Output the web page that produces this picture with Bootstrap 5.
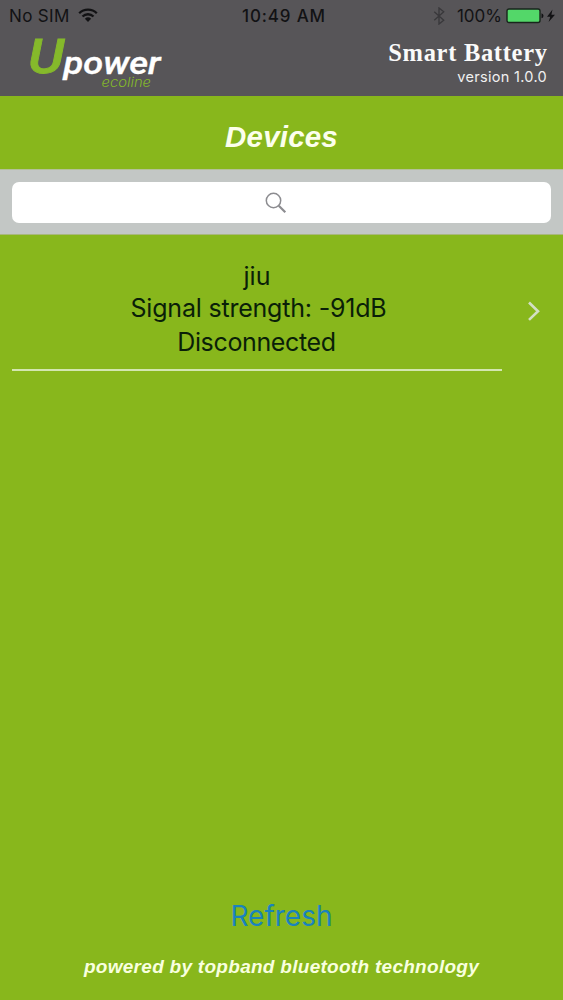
<!DOCTYPE html>
<html lang="en">
<head>
<meta charset="utf-8">
<meta name="viewport" content="width=device-width, initial-scale=1">
<title>Smart Battery</title>
<link href="https://cdn.jsdelivr.net/npm/bootstrap@5.3.0/dist/css/bootstrap.min.css" rel="stylesheet">
<style>
  body { background: #88b71c; font-family: Inter, Roboto, sans-serif; color: #0a1f08; }
  .topbar { height: 96px; background: #575558; }
  .statusbar { height: 31px; font-size: 17px; line-height: 31px; color: #121214; padding: 0 7px 0 9px; }
  .statusbar > div { flex: 1 1 0; }
  .nosim { letter-spacing: .35px; }
  .clock { font-weight: 500; letter-spacing: .85px; padding-left: 3px; }
  .clock, .nosim, .percent { padding-top: 1px; }
  .logo { overflow: visible; }
  .brand-title { font: bold 24.5px/26px "Liberation Serif", serif; letter-spacing: .7px; margin-right: -.7px; padding-top: 1px; color: #fafafa; }
  .version { font-size: 14.5px; line-height: 21px; color: #f0f0f0; letter-spacing: .3px; }
  .screen-title { font: italic bold 29.5px/33px "Liberation Sans", sans-serif; letter-spacing: .2px; color: #fcffec; height: 73px; padding-top: 24px; }
  .searchbar { height: 66px; background: #c3c7c5; padding: 12px; border-top: 1px solid #b4c198; border-bottom: 1px solid #a9b77d; }
  .searchbox { height: 41px; border-radius: 7px; }
  .device { height: 136px; padding: 25px 12px 0; }
  .device-text { width: 490px; height: 111px; border-bottom: 2px solid #d3e6b0; font-size: 25px; line-height: 34px; }
  .device-name { line-height: 32px; }
  .signal { line-height: 33px; letter-spacing: -.2px; padding-left: 3px; }
  .state { letter-spacing: -.35px; padding-right: 1px; }
  footer { height: 101px; }
  .refresh { font-size: 28px; line-height: 34px; color: #1a83bd; }
  .powered { font: italic bold 19px/22px "Liberation Sans", sans-serif; letter-spacing: .28px; color: #f8ffdf; margin-top: 23px; }
</style>
</head>
<body class="min-vh-100 d-flex flex-column overflow-hidden">
<header class="topbar">
  <div class="statusbar d-flex">
    <div class="d-flex align-items-center">
      <span class="nosim">No SIM</span>
      <svg class="ms-2" width="20" height="15" viewBox="0 0 20 15" fill="none" stroke="#121214" stroke-width="2.3"><path d="M1.2 5.2a12.5 12.5 0 0 1 17.6 0M4.5 8.5a7.8 7.8 0 0 1 11 0"/><path d="M10 14l-3.1-3.2a4.5 4.5 0 0 1 6.2 0z" fill="#121214" stroke="none"/></svg>
    </div>
    <div class="clock text-center">10:49 AM</div>
    <div class="d-flex align-items-center justify-content-end">
      <svg class="me-1" width="12" height="18" viewBox="0 0 12 19" fill="none" stroke="#39383b" stroke-width="1.4"><path d="M1 5l10 9-5 4V1l5 4L1 14"/></svg>
      <span class="percent ms-2">100%</span>
      <svg class="ms-1" width="50" height="16" viewBox="0 0 50 16"><rect x="1" y="1" width="33" height="13.5" rx="2" fill="#53d769" stroke="#19251c" stroke-width="1.4"/><path d="M35.5 5.3q2 .5 2 2.5t-2 2.5z" fill="#121214"/><path d="M46.5 1.5L41 8.7h3.3L42.6 14 49 6.7h-3.6z" fill="#121214"/></svg>
    </div>
  </div>
  <div class="d-flex justify-content-between">
    <svg class="logo" width="180" height="64" viewBox="0 31 180 64">
      <text x="28" y="73" font-family="Roboto" font-style="italic" font-weight="500" font-size="48" fill="#85b92b" stroke="#85b92b" stroke-width=".8" textLength="36" lengthAdjust="spacingAndGlyphs">U</text>
      <text x="63.5" y="73.5" font-family="Roboto" font-style="italic" font-weight="500" font-size="31" fill="#fff" stroke="#fff" stroke-width=".4" textLength="97" lengthAdjust="spacingAndGlyphs">power</text>
      <text x="101.5" y="87" font-family="Inter" font-style="italic" font-weight="300" font-size="13" fill="#85b92b" textLength="49.5" lengthAdjust="spacingAndGlyphs">ecoline</text>
    </svg>
    <div class="text-end pe-3 pt-2">
      <div class="brand-title">Smart Battery</div>
      <div class="version">version 1.0.0</div>
    </div>
  </div>
</header>
<h1 class="screen-title text-center m-0">Devices</h1>
<div class="searchbar">
  <div class="searchbox bg-white d-flex align-items-center justify-content-center" role="search">
    <svg class="me-2" width="25" height="22" viewBox="1 0 25 22" fill="none" stroke="#8c8c90"><circle cx="9.5" cy="8.5" r="7.2" stroke-width="1.5"/><path d="M14.8 13.8l6.5 6.5" stroke-width="2.2"/></svg>
  </div>
</div>
<main class="flex-grow-1">
  <div class="device d-flex justify-content-between">
    <div class="device-text text-center"><div class="device-name">jiu</div><div class="signal">Signal strength: -91dB</div><div class="state">Disconnected</div></div>
    <svg class="mt-4 me-2" width="20" height="54" viewBox="0 0 20 54" fill="none" stroke="#d3dfc4" stroke-width="2.6"><path d="M6 18.5l9 8.7-9 8.7"/></svg>
  </div>
</main>
<footer class="text-center">
  <div class="refresh">Refresh</div>
  <div class="powered">powered by topband bluetooth technology</div>
</footer>
<script src="https://cdn.jsdelivr.net/npm/bootstrap@5.3.0/dist/js/bootstrap.bundle.min.js"></script>
</body>
</html>
